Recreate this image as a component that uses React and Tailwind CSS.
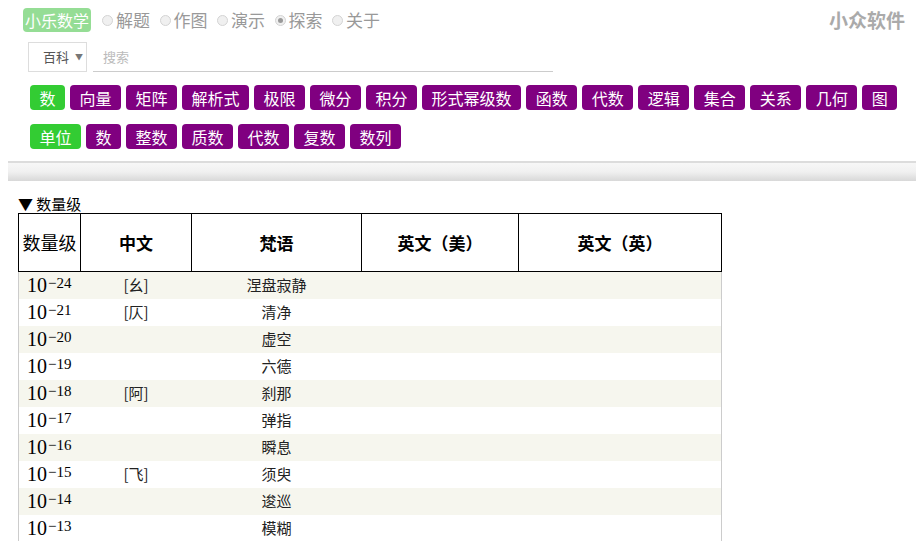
import React from "react";

const cjk = { fontFamily: '"Noto Sans CJK SC", "Noto Sans", sans-serif' };

const row1 = ["向量", "矩阵", "解析式", "极限", "微分", "积分", "形式幂级数", "函数", "代数", "逻辑", "集合", "关系", "几何", "图"];
const row2 = ["数", "整数", "质数", "代数", "复数", "数列"];

const rows = [
  ["-24", "[幺]", "涅盘寂静"],
  ["-21", "[仄]", "清净"],
  ["-20", "", "虚空"],
  ["-19", "", "六德"],
  ["-18", "[阿]", "刹那"],
  ["-17", "", "弹指"],
  ["-16", "", "瞬息"],
  ["-15", "[飞]", "须臾"],
  ["-14", "", "逡巡"],
  ["-13", "", "模糊"],
];

const Radio = ({ label, checked }) => (
  <label className="flex items-center">
    <span className="w-[11px] h-[11px] rounded-full border border-[#d4d4d4] bg-[#f0f0f0] flex items-center justify-center">
      {checked && <span className="w-[5px] h-[5px] rounded-full bg-[#9a9a9a]"></span>}
    </span>
    <span className="ml-[3px] text-[17px] text-[#999]">{label}</span>
  </label>
);

const Btn = ({ children, active }) => (
  <span
    className={`inline-flex items-center h-[25px] px-[9.5px] rounded-[4px] text-[16px] text-white leading-none ${
      active ? "bg-[#33cc33]" : "bg-[#800080]"
    }`}
  >
    {children}
  </span>
);

export default function App() {
  return (
    <div className="bg-white w-[916px] min-h-[541px]" style={cjk}>
      {/* top bar */}
      <div className="flex items-center pt-[8px] pl-[23px] pr-[11px] h-[32px]">
        <span className="h-[24px] px-[2px] flex items-center rounded-[4px] bg-[#95dd95] text-white text-[16px]">小乐数学</span>
        <div className="flex items-center gap-[9.5px] ml-[11px]">
          <Radio label="解题" />
          <Radio label="作图" />
          <Radio label="演示" />
          <Radio label="探索" checked />
          <Radio label="关于" />
        </div>
        <span className="ml-auto text-[19px] font-bold text-[#aaa]">小众软件</span>
      </div>

      {/* search */}
      <div className="flex items-end mt-[10px] pl-[28px]">
        <div className="w-[59px] h-[30px] border border-[#ddd] flex items-center pl-[14px] text-[13px] text-[#555]">
          百科<span className="ml-[6px] text-[8px] text-[#777]">▼</span>
        </div>
        <div className="ml-[6px] w-[460px] h-[30px] border-b border-[#ccc] flex items-center pl-[10px] text-[13px] text-[#bbb]">
          搜索
        </div>
      </div>

      {/* buttons */}
      <div className="flex gap-[5px] pl-[30px] mt-[13px]">
        <Btn active>数</Btn>
        {row1.map((t) => (
          <Btn key={t}>{t}</Btn>
        ))}
      </div>
      <div className="flex gap-[5px] pl-[30px] mt-[14px]">
        <Btn active>单位</Btn>
        {row2.map((t, i) => (
          <Btn key={i}>{t}</Btn>
        ))}
      </div>

      {/* separator */}
      <div className="ml-[8px] mt-[12px]">
        <div className="h-[2px] bg-[#dcdcdc]"></div>
        <div className="h-[18px] bg-gradient-to-b from-[#f7f7f7] via-[#f0f0f0] to-[#d8d8d8]"></div>
      </div>

      {/* section */}
      <div className="pl-[18px] mt-[14px] text-[15px] leading-[18px] text-black">▼ 数量级</div>
      <table className="ml-[18px] border-collapse w-[704px] text-black">
        <thead>
          <tr className="h-[58px]">
            <th className="w-[62px] border border-black font-normal text-[18px] px-0">数量级</th>
            <th className="w-[111px] border border-black font-bold text-[17px]">中文</th>
            <th className="w-[170px] border border-black font-bold text-[17px]">梵语</th>
            <th className="w-[157px] border border-black font-bold text-[17px]">英文（美）</th>
            <th className="w-[203px] border border-black font-bold text-[17px]">英文（英）</th>
          </tr>
        </thead>
        <tbody>
          {rows.map(([e, zh, sk], i) => (
            <tr key={e} className={`h-[27px] ${i % 2 === 0 ? "bg-[#f6f6ee]" : "bg-white"}`}>
              <td className="border-l border-[#ccc] pl-[8px] p-0 whitespace-nowrap">
                <span className="text-[20px] leading-[20px]" style={{ fontFamily: '"Liberation Serif", serif' }}>
                  10<sup className="text-[15px] ml-[1px] relative top-[-4px]">−{e.slice(1)}</sup>
                </span>
              </td>
              <td className="text-center text-[15px] text-[#222] p-0">{zh}</td>
              <td className="text-center text-[15px] text-[#222] p-0">{sk}</td>
              <td className="p-0"></td>
              <td className="border-r border-[#ccc] p-0"></td>
            </tr>
          ))}
        </tbody>
      </table>
    </div>
  );
}
